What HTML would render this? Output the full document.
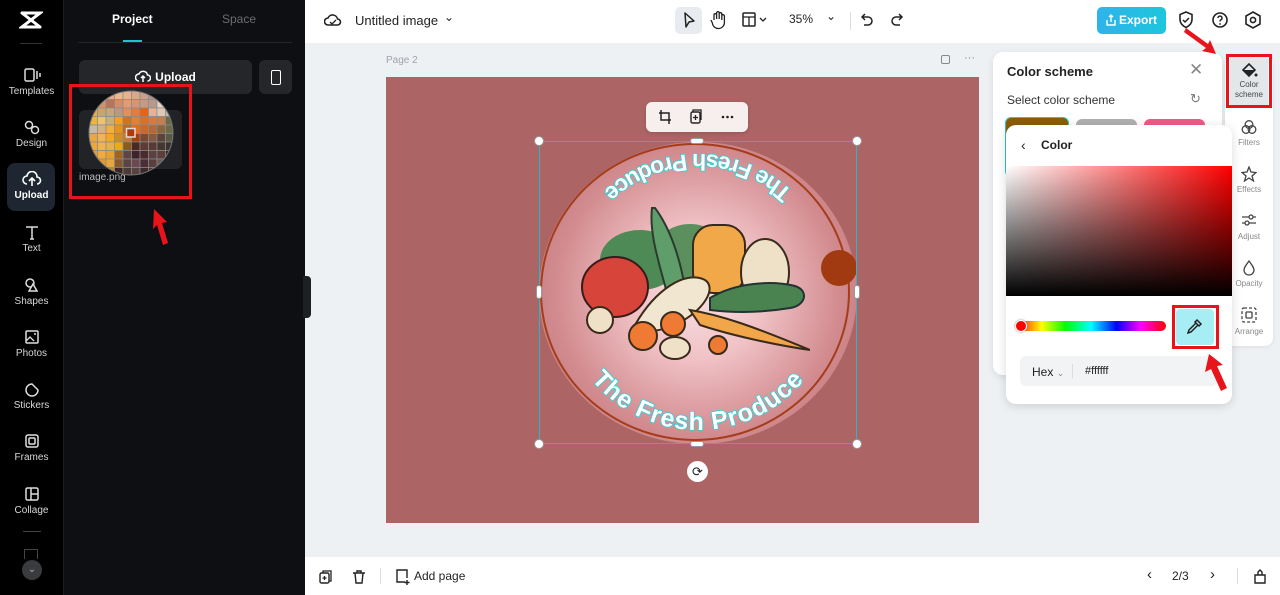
<!DOCTYPE html>
<html><head><meta charset="utf-8">
<style>
*{box-sizing:border-box;margin:0;padding:0}
body{width:1280px;height:595px;overflow:hidden;position:relative;font-family:"Liberation Sans",sans-serif;background:#eef1f4}
.abs{position:absolute}
.nav{left:0;top:0;width:63px;height:595px;background:#000}
.navi{position:absolute;left:0;width:63px;text-align:center;color:#d8d8d8;font-size:10px}
.navi svg{display:block;margin:0 auto 3px}
.panel{left:63px;top:0;width:242px;height:595px;background:#0e0f12;border-left:1px solid #1c1d20}
.top{left:305px;top:0;width:975px;height:43px;background:#fff}
.bot{left:305px;top:557px;width:975px;height:38px;background:#fff}
.red{border:3px solid #e8141c}
</style></head><body>

<div class="abs nav">
  <svg class="abs" style="left:19px;top:10px" width="24" height="20" viewBox="0 0 24 20"><path d="M3 3h18L3 17h18M3 3l18 14" stroke="#fff" stroke-width="3" fill="none" stroke-linecap="round"/></svg>
  <div class="abs" style="left:20px;top:43px;width:22px;height:1px;background:#333"></div>
  <div class="navi" style="top:67px"><svg width="18" height="16"><rect x="2" y="2" width="9" height="12" rx="1.5" stroke="#ddd" stroke-width="1.5" fill="none"/><path d="M14 4v8M17 6v4" stroke="#ddd" stroke-width="1.5"/></svg>Templates</div>
  <div class="navi" style="top:119px"><svg width="18" height="16"><circle cx="6" cy="6" r="3.5" stroke="#ddd" stroke-width="1.5" fill="none"/><circle cx="12" cy="11" r="3.5" stroke="#ddd" stroke-width="1.5" fill="none"/></svg>Design</div>
  <div class="abs" style="left:7px;top:163px;width:48px;height:48px;border-radius:8px;background:#1d2631"></div>
  <div class="navi" style="top:171px;color:#fff;font-weight:bold"><svg width="20" height="16"><path d="M5 13a4 4 0 0 1 0-8 5 5 0 0 1 10 1 3.5 3.5 0 0 1 0 7M10 8v7M7 10l3-3 3 3" stroke="#fff" stroke-width="1.6" fill="none"/></svg>Upload</div>
  <div class="navi" style="top:224px"><svg width="18" height="16"><path d="M3 3h12M9 3v12M7 15h4" stroke="#ddd" stroke-width="1.5" fill="none"/></svg>Text</div>
  <div class="navi" style="top:277px"><svg width="18" height="16"><circle cx="7" cy="6" r="4" stroke="#ddd" stroke-width="1.5" fill="none"/><path d="M10 7l4 7H6z" stroke="#ddd" stroke-width="1.5" fill="#000"/></svg>Shapes</div>
  <div class="navi" style="top:329px"><svg width="18" height="16"><rect x="3" y="2" width="12" height="12" rx="1" stroke="#ddd" stroke-width="1.5" fill="none"/><path d="M3 12l4-4 4 4" stroke="#ddd" stroke-width="1.3" fill="none"/><circle cx="12" cy="5" r="1" fill="#ddd"/></svg>Photos</div>
  <div class="navi" style="top:381px"><svg width="18" height="16"><path d="M15 9a6 6 0 1 1-6-6l6 6z" stroke="#ddd" stroke-width="1.5" fill="none"/></svg>Stickers</div>
  <div class="navi" style="top:433px"><svg width="18" height="16"><rect x="3" y="2" width="12" height="12" rx="2" stroke="#ddd" stroke-width="1.5" fill="none"/><rect x="6" y="5" width="6" height="6" rx="1" stroke="#ddd" stroke-width="1.5" fill="none"/></svg>Frames</div>
  <div class="navi" style="top:486px"><svg width="18" height="16"><rect x="3" y="2" width="12" height="12" rx="1.5" stroke="#ddd" stroke-width="1.5" fill="none"/><path d="M8 2v12M8 8h7" stroke="#ddd" stroke-width="1.5"/></svg>Collage</div>
  <div class="abs" style="left:23px;top:531px;width:18px;height:1px;background:#444"></div>
  <div class="abs" style="left:24px;top:549px;width:14px;height:10px;border:1px solid #444;border-bottom:none"></div>
  <div class="abs" style="left:22px;top:560px;width:20px;height:20px;border-radius:50%;background:#3a3b3f;color:#aaa;font-size:10px;text-align:center;line-height:20px">⌄</div>
</div>

<div class="abs panel">
  <div class="abs" style="left:48px;top:12px;color:#fff;font-weight:bold;font-size:12px">Project</div>
  <div class="abs" style="left:158px;top:12px;color:#6c6d70;font-size:12px">Space</div>
  <div class="abs" style="left:14px;top:42px;width:214px;height:1px;background:#25262a"></div>
  <div class="abs" style="left:59px;top:40px;width:19px;height:2px;background:#1fc1d3"></div>
  <div class="abs" style="left:15px;top:60px;width:173px;height:34px;border-radius:6px;background:#25262a;color:#fff;font-weight:bold;font-size:12px;line-height:34px;text-align:center">
    <svg width="16" height="14" style="vertical-align:-2px;margin-right:4px"><path d="M4 12a3.5 3.5 0 0 1 0-7 4.5 4.5 0 0 1 8.5 1 3 3 0 0 1 0 6M8 7v6M6 9l2-2 2 2" stroke="#fff" stroke-width="1.5" fill="none"/></svg>Upload</div>
  <div class="abs" style="left:195px;top:60px;width:33px;height:34px;border-radius:6px;background:#25262a"><div style="margin:10px auto;width:10px;height:15px;border:1.5px solid #fff;border-radius:2px"></div></div>
  <div class="abs" style="left:15px;top:110px;width:103px;height:59px;border-radius:6px;background:#222327"></div>
  <div class="abs" style="left:15px;top:172px;color:#bbb;font-size:10px">image.png</div>
</div>
<svg class="abs" style="left:86px;top:88px" width="90" height="90" viewBox="0 0 90 90">
  <defs><clipPath id="c"><circle cx="45" cy="45" r="42"/></clipPath></defs>
  <g clip-path="url(#c)" stroke="#8a8a8a" stroke-width="0.7">
    <g id="grid"></g>
  </g>
  <circle cx="45" cy="45" r="42" fill="none" stroke="#777" stroke-width="1"/>
</svg>
<div class="abs red" style="left:69px;top:84px;width:123px;height:115px"></div>
<svg class="abs" style="left:148px;top:205px" width="30" height="44"><path d="M6 4l13 13-5 1 6 20-5 2-6-20-4 4z" fill="#e8141c"/></svg>
<div class="abs" style="left:303px;top:276px;width:8px;height:42px;background:#1e1f22;border-radius:0 4px 4px 0"></div>

<div class="abs top">
  <svg class="abs" style="left:19px;top:12px" width="18" height="16"><path d="M4 13a3.5 3.5 0 0 1 0-7 5 5 0 0 1 9.5 1 3 3 0 0 1 0 6z" stroke="#222" stroke-width="1.6" fill="none"/><path d="M6 10l2 2 4-4" stroke="#222" stroke-width="1.3" fill="none"/></svg>
  <div class="abs" style="left:50px;top:13px;font-size:13px;color:#222">Untitled image</div>
  <div class="abs" style="left:139px;top:10px;font-size:12px;color:#222">⌄</div>
  <div class="abs" style="left:370px;top:7px;width:27px;height:27px;border-radius:5px;background:#e8ecf0"></div>
  <svg class="abs" style="left:376px;top:11px" width="16" height="18"><path d="M4 2l9 8-5 1-3 5z" stroke="#222" stroke-width="1.5" fill="none" stroke-linejoin="round"/></svg>
  <svg class="abs" style="left:404px;top:10px" width="18" height="20"><path d="M5 10V5a1.3 1.3 0 0 1 2.6 0v4V3a1.3 1.3 0 0 1 2.6 0v6V4a1.3 1.3 0 0 1 2.6 0v6V6a1.3 1.3 0 0 1 2.6 0v6a6 6 0 0 1-12 1l-1.5-3" stroke="#222" stroke-width="1.3" fill="none"/></svg>
  <svg class="abs" style="left:437px;top:12px" width="28" height="16"><rect x="1" y="1" width="12" height="13" rx="1" stroke="#222" stroke-width="1.5" fill="none"/><path d="M1 5h12M7 5v9M18 6l3 3 3-3" stroke="#222" stroke-width="1.3" fill="none"/></svg>
  <div class="abs" style="left:484px;top:12px;font-size:12px;color:#222">35%</div>
  <div class="abs" style="left:521px;top:9px;font-size:12px;color:#222">⌄</div>
  <div class="abs" style="left:545px;top:12px;width:1px;height:18px;background:#ddd"></div>
  <svg class="abs" style="left:554px;top:11px" width="16" height="18"><path d="M6 3L3 6l3 3M3 6h6a4 4 0 0 1 0 8H5" stroke="#222" stroke-width="1.5" fill="none"/></svg>
  <svg class="abs" style="left:584px;top:11px" width="16" height="18"><path d="M10 3l3 3-3 3M13 6H7a4 4 0 0 0 0 8h4" stroke="#222" stroke-width="1.5" fill="none"/></svg>
  <div class="abs" style="left:792px;top:7px;width:69px;height:27px;border-radius:5px;background:linear-gradient(90deg,#2fb3ea,#1dc6dc);color:#fff;font-weight:bold;font-size:12px;line-height:27px;padding-left:22px">Export</div>
  <svg class="abs" style="left:800px;top:13px" width="12" height="14"><path d="M2 7v5h8V7M6 9V2M4 4l2-2 2 2" stroke="#fff" stroke-width="1.4" fill="none"/></svg>
  <svg class="abs" style="left:872px;top:10px" width="18" height="20"><path d="M9 2l6 2.5v5c0 4-3 6.5-6 8-3-1.5-6-4-6-8v-5z" stroke="#222" stroke-width="1.6" fill="none"/><path d="M6 10l2 2 4-4" stroke="#222" stroke-width="1.5" fill="none"/></svg>
  <svg class="abs" style="left:905px;top:10px" width="20" height="20"><circle cx="10" cy="10" r="7" stroke="#222" stroke-width="1.6" fill="none"/><path d="M8 8a2 2 0 1 1 2.5 2c-.5.3-.5.8-.5 1.5" stroke="#222" stroke-width="1.4" fill="none"/><circle cx="10" cy="14" r=".9" fill="#222"/></svg>
  <svg class="abs" style="left:938px;top:10px" width="20" height="20"><path d="M10 2l7 4v8l-7 4-7-4V6z" stroke="#222" stroke-width="1.6" fill="none"/><circle cx="10" cy="10" r="2.6" stroke="#222" stroke-width="1.6" fill="none"/></svg>
</div>

<div class="abs" style="left:386px;top:55px;font-size:10px;color:#a0a4a8">Page 2</div>
<div class="abs" style="left:941px;top:55px;width:9px;height:9px;border:1.3px solid #888;border-radius:2px"></div>
<div class="abs" style="left:964px;top:52px;font-size:11px;color:#888">···</div>

<div class="abs" style="left:386px;top:77px;width:593px;height:446px;background:#ad6464"></div>
<div class="abs" style="left:539px;top:142px;width:318px;height:302px;border-radius:50%;background:radial-gradient(circle at 50% 50%,#f7e0e2 0%,#f0c2c6 30%,#d28b8f 65%,#b36a6c 100%)"></div>
<div class="abs" style="left:540px;top:143px;width:310px;height:298px;border-radius:50%;border:2px solid #a53c1a"></div>
<svg class="abs" style="left:560px;top:190px" width="250" height="170" viewBox="0 0 250 170">
  <ellipse cx="80" cy="70" rx="40" ry="30" fill="#4d8a56"/>
  <ellipse cx="130" cy="62" rx="35" ry="28" fill="#5b8f5e"/>
  <path d="M95 18c15 20 25 50 30 80l-18 5c-8-30-18-60-15-85z" fill="#5f9e6b" stroke="#2b3b2c" stroke-width="2"/>
  <rect x="133" y="35" width="52" height="68" rx="20" fill="#f0a848" stroke="#3a2a1a" stroke-width="2"/>
  <ellipse cx="205" cy="82" rx="24" ry="33" fill="#efe1c8" stroke="#3a2a1a" stroke-width="2"/>
  <ellipse cx="55" cy="97" rx="33" ry="30" fill="#d6443a" stroke="#3a1a1a" stroke-width="2"/>
  <path d="M150 108c25-15 60-18 85-12 15 5 10 20-5 22-30 5-55 5-80 2z" fill="#4b8350" stroke="#233" stroke-width="2"/>
  <path d="M75 135c20-35 50-55 70-45 12 8 0 30-30 45-20 8-35 8-40 0z" fill="#f1e6cf" stroke="#3a2a1a" stroke-width="2"/>
  <path d="M130 120c30 5 60 15 120 40-35-5-80-15-110-25z" fill="#f1a64a" stroke="#3a2a1a" stroke-width="2"/>
  <circle cx="40" cy="130" r="13" fill="#efe1c8" stroke="#3a2a1a" stroke-width="2"/>
  <circle cx="83" cy="146" r="14" fill="#ee7a33" stroke="#3a2a1a" stroke-width="2"/>
  <circle cx="113" cy="134" r="12" fill="#ee7a33" stroke="#3a2a1a" stroke-width="2"/>
  <ellipse cx="115" cy="158" rx="15" ry="11" fill="#efe1c8" stroke="#3a2a1a" stroke-width="2"/>
  <circle cx="158" cy="155" r="9" fill="#ee7a33" stroke="#3a2a1a" stroke-width="2"/>
</svg>
<svg class="abs" style="left:539px;top:141px" width="318" height="303" viewBox="0 0 318 303">
  <defs>
    <path id="tp" d="M39.5 220 A 138 138 0 0 0 278.5 220"/>
  </defs>
  <text font-family="Liberation Sans,sans-serif" font-weight="bold" font-size="25" fill="#fff" stroke="#2ad0d8" stroke-width="1.6" paint-order="stroke" letter-spacing="1"><textPath href="#tp" startOffset="50%" text-anchor="middle">The Fresh Produce</textPath></text>
  <g transform="rotate(180 159 151)">
  <text font-family="Liberation Sans,sans-serif" font-weight="bold" font-size="23" fill="#fff" stroke="#2ad0d8" stroke-width="1.6" paint-order="stroke"><textPath href="#tp" startOffset="50%" text-anchor="middle">The Fresh Produce</textPath></text>
  </g>
</svg>
<div class="abs" style="left:821px;top:250px;width:36px;height:36px;border-radius:50%;background:#a13a10"></div>
<div class="abs" style="left:539px;top:141px;width:318px;height:303px;border:1.5px solid #27b7c6"></div>
<div class="abs" style="left:534px;top:136px;width:10px;height:10px;border-radius:50%;background:#fff;border:1px solid #999"></div>
<div class="abs" style="left:852px;top:136px;width:10px;height:10px;border-radius:50%;background:#fff;border:1px solid #999"></div>
<div class="abs" style="left:534px;top:439px;width:10px;height:10px;border-radius:50%;background:#fff;border:1px solid #999"></div>
<div class="abs" style="left:852px;top:439px;width:10px;height:10px;border-radius:50%;background:#fff;border:1px solid #999"></div>
<div class="abs" style="left:690px;top:138px;width:14px;height:6px;border-radius:3px;background:#fff;border:1px solid #999"></div>
<div class="abs" style="left:690px;top:441px;width:14px;height:6px;border-radius:3px;background:#fff;border:1px solid #999"></div>
<div class="abs" style="left:536px;top:285px;width:6px;height:14px;border-radius:3px;background:#fff;border:1px solid #999"></div>
<div class="abs" style="left:854px;top:285px;width:6px;height:14px;border-radius:3px;background:#fff;border:1px solid #999"></div>
<div class="abs" style="left:687px;top:461px;width:21px;height:21px;border-radius:50%;background:#fff;text-align:center;font-size:13px;line-height:21px;color:#222">⟳</div>
<div class="abs" style="left:646px;top:102px;width:102px;height:30px;border-radius:6px;background:#f7eeee;box-shadow:0 1px 4px rgba(0,0,0,.15)"></div>
<svg class="abs" style="left:658px;top:109px" width="80" height="16"><path d="M3 1v10h10M1 4h10v11" stroke="#222" stroke-width="1.5" fill="none"/><rect x="33" y="3" width="9" height="11" rx="1.5" stroke="#222" stroke-width="1.4" fill="none"/><path d="M35 3V1h8v10M37.5 6v5M35 8.5h5" stroke="#222" stroke-width="1.3" fill="none"/><circle cx="65" cy="8" r="1.3" fill="#222"/><circle cx="69.5" cy="8" r="1.3" fill="#222"/><circle cx="74" cy="8" r="1.3" fill="#222"/></svg>

<div class="abs" style="left:993px;top:52px;width:229px;height:323px;border-radius:10px;background:#fff;box-shadow:0 2px 8px rgba(0,0,0,.1)"></div>
<div class="abs" style="left:1007px;top:64px;font-size:13px;font-weight:bold;color:#222">Color scheme</div>
<div class="abs" style="left:1189px;top:60px;font-size:17px;color:#888">✕</div>
<div class="abs" style="left:1007px;top:93px;font-size:12px;color:#333">Select color scheme</div>
<div class="abs" style="left:1190px;top:91px;font-size:13px;color:#777">↻</div>
<div class="abs" style="left:1005px;top:117px;width:64px;height:60px;border-radius:6px;border:1.5px solid #2bc4d6;background:#8e5c07"></div>
<div class="abs" style="left:1076px;top:119px;width:61px;height:20px;border-radius:6px;background:#b0b0b0"></div>
<div class="abs" style="left:1144px;top:119px;width:61px;height:20px;border-radius:6px;background:#ef5a86"></div>
<div class="abs" style="left:1225px;top:55px;width:48px;height:291px;border-radius:8px;background:#fff;box-shadow:0 1px 4px rgba(0,0,0,.08)"></div>
<div class="abs" style="left:1230px;top:57px;width:38px;height:48px;background:#e4e7ea"></div>
<div class="abs red" style="left:1226px;top:54px;width:46px;height:54px"></div>
<svg class="abs" style="left:1240px;top:61px" width="18" height="18"><path d="M3 9l6-6 6 6-6 6z" stroke="#222" stroke-width="1.6" fill="none"/><path d="M3 9h12l-6 6z" fill="#222"/><circle cx="16" cy="14" r="1.5" fill="#222"/></svg>
<div class="abs" style="left:1227px;top:80px;width:44px;text-align:center;font-size:8px;color:#444;line-height:10px">Color<br>scheme</div>
<svg class="abs" style="left:1241px;top:119px" width="16" height="16"><circle cx="8" cy="5.5" r="3.8" stroke="#444" stroke-width="1.3" fill="none"/><circle cx="5" cy="10.5" r="3.8" stroke="#444" stroke-width="1.3" fill="none"/><circle cx="11" cy="10.5" r="3.8" stroke="#444" stroke-width="1.3" fill="none"/></svg>
<div class="abs" style="left:1225px;top:138px;width:48px;text-align:center;font-size:8px;color:#888">Filters</div>
<svg class="abs" style="left:1241px;top:166px" width="16" height="16"><path d="M8 1l2 5 5 .5-4 3.5 1.5 5L8 12l-4.5 3L5 10 1 6.5 6 6z" stroke="#444" stroke-width="1.3" fill="none"/></svg>
<div class="abs" style="left:1225px;top:185px;width:48px;text-align:center;font-size:8px;color:#888">Effects</div>
<svg class="abs" style="left:1241px;top:212px" width="16" height="16"><path d="M1 5h14M1 11h14" stroke="#444" stroke-width="1.3"/><circle cx="10" cy="5" r="2" fill="#fff" stroke="#444" stroke-width="1.3"/><circle cx="6" cy="11" r="2" fill="#fff" stroke="#444" stroke-width="1.3"/></svg>
<div class="abs" style="left:1225px;top:232px;width:48px;text-align:center;font-size:8px;color:#888">Adjust</div>
<svg class="abs" style="left:1241px;top:260px" width="16" height="16"><path d="M8 1c3 4 5 6.5 5 9a5 5 0 0 1-10 0c0-2.5 2-5 5-9z" stroke="#444" stroke-width="1.3" fill="none"/></svg>
<div class="abs" style="left:1225px;top:279px;width:48px;text-align:center;font-size:8px;color:#888">Opacity</div>
<svg class="abs" style="left:1241px;top:307px" width="16" height="16"><rect x="1" y="1" width="14" height="14" rx="2" stroke="#444" stroke-width="1.3" fill="none" stroke-dasharray="3 2"/><rect x="5" y="5" width="6" height="6" rx="1" stroke="#444" stroke-width="1.3" fill="none"/></svg>
<div class="abs" style="left:1225px;top:327px;width:48px;text-align:center;font-size:8px;color:#888">Arrange</div>
<svg class="abs" style="left:1182px;top:24px" width="40" height="32"><path d="M4 4l22 16 2-4 6 14-14-3 4-3L2 8z" fill="#e8141c"/></svg>

<div class="abs" style="left:1006px;top:125px;width:226px;height:279px;border-radius:10px;background:#fff;box-shadow:0 2px 10px rgba(0,0,0,.15)"></div>
<div class="abs" style="left:1021px;top:137px;font-size:14px;color:#222">‹</div>
<div class="abs" style="left:1041px;top:138px;font-size:12px;font-weight:bold;color:#222">Color</div>
<div class="abs" style="left:1006px;top:166px;width:226px;height:130px;background:linear-gradient(to bottom,rgba(0,0,0,0),#000),linear-gradient(to right,#fff,#f00)"></div>
<div class="abs" style="left:1016px;top:321px;width:150px;height:10px;border-radius:5px;background:linear-gradient(90deg,#f00,#ff0 17%,#0f0 33%,#0ff 50%,#00f 67%,#f0f 83%,#f00)"></div>
<div class="abs" style="left:1015px;top:320px;width:12px;height:12px;border-radius:50%;background:#f00;border:1.5px solid #fff;box-shadow:0 0 2px #888"></div>
<div class="abs" style="left:1176px;top:309px;width:38px;height:36px;border-radius:4px;background:#a6eef4"></div>
<div class="abs red" style="left:1172px;top:305px;width:47px;height:44px"></div>
<svg class="abs" style="left:1186px;top:317px" width="18" height="18"><path d="M11 3l4 4-2 2-4-4zM10 6l-7 7-1 3 3-1 7-7" stroke="#222" stroke-width="1.5" fill="none"/></svg>
<div class="abs" style="left:1020px;top:356px;width:198px;height:30px;border-radius:6px;background:#f1f3f5"></div>
<div class="abs" style="left:1032px;top:365px;font-size:12px;color:#222">Hex <span style="font-size:9px;color:#888">⌄</span></div>
<div class="abs" style="left:1072px;top:364px;width:1px;height:14px;background:#ddd"></div>
<div class="abs" style="left:1085px;top:365px;font-size:11px;color:#222">#ffffff</div>
<svg class="abs" style="left:1203px;top:350px" width="30" height="46"><path d="M6 4l-4 18 6-3 10 22 6-3-10-22 6-1z" fill="#e8141c"/></svg>

<div class="abs bot">
  <svg class="abs" style="left:13px;top:12px" width="16" height="16"><rect x="2" y="4" width="9" height="10" rx="1.5" stroke="#222" stroke-width="1.4" fill="none"/><path d="M5 4V2h8v10h-2M6.5 7v4M4.5 9h4" stroke="#222" stroke-width="1.3" fill="none"/></svg>
  <svg class="abs" style="left:46px;top:12px" width="16" height="16"><path d="M2 4h12M6 4V2h4v2M4 4l1 10h6l1-10" stroke="#222" stroke-width="1.4" fill="none"/></svg>
  <div class="abs" style="left:75px;top:11px;width:1px;height:16px;background:#ddd"></div>
  <svg class="abs" style="left:89px;top:11px" width="18" height="18"><path d="M11 14H3V2h10v8M13 12v5M10.5 14.5h5" stroke="#222" stroke-width="1.4" fill="none"/></svg>
  <div class="abs" style="left:109px;top:12px;font-size:12px;color:#222">Add page</div>
  <div class="abs" style="left:842px;top:9px;font-size:15px;color:#222">‹</div>
  <div class="abs" style="left:867px;top:12px;font-size:12px;color:#222">2/3</div>
  <div class="abs" style="left:905px;top:9px;font-size:15px;color:#222">›</div>
  <div class="abs" style="left:932px;top:11px;width:1px;height:16px;background:#ddd"></div>
  <svg class="abs" style="left:947px;top:10px" width="16" height="18"><path d="M3 8h10v8H3zM6 8V5l2-2 2 2v3" stroke="#222" stroke-width="1.4" fill="none"/></svg>
</div>

<script>
var cols=[
"#d7a58a,#e3a585,#e9a985,#f0b68e,#e8b291,#d9a98c,#c9a08b,#b79486,#a58a84,#998482",
"#c89d7d,#d89164,#b87358,#d48c69,#e19c75,#d59576,#c59b86,#b79a8c,#e3d4c7,#ccc",
"#f2a646,#cba46c,#c7a77a,#b99883,#e38e5c,#e17c43,#e8620f,#e7b298,#e0c8b4,#bbb",
"#f0b43c,#eec276,#c8ad7d,#f0a21e,#d2741d,#e08133,#d8712a,#d47a42,#c47e4e,#6b6a48",
"#c8b8a6,#d7b089,#f0b040,#e2941c,#c0641e,#e86e0c,#c86a2c,#b06a3c,#8a6640,#6e6a48",
"#e8a840,#f2b35a,#f2aa1c,#cc8d24,#c57a34,#a5400c,#7a4a34,#855a40,#5c4438,#5a5a42",
"#eea838,#f3b24a,#eab048,#f0aa10,#8e5a18,#4a2826,#5c3a36,#5a3a34,#463632,#3a3230",
"#e8a030,#f2aa3c,#e8a030,#a0641c,#5e4444,#3e2428,#4a2a2c,#5a4040,#5c3e3a,#2e2624",
"#d89030,#e49a30,#e6a83c,#8a5a2a,#5a4444,#6a4a4e,#4a3036,#5a3e40,#6a5a56,#3e3432",
"#c88a34,#d08a28,#c0822c,#3a2624,#4e3a36,#5a4240,#3e2a2c,#4a3636,#5a4a48,#2a2422"];
var g=document.getElementById('grid'),s='';
for(var r=0;r<10;r++){var c=cols[r].split(',');for(var k=0;k<10;k++){s+='<rect x="'+(3+k*8.5)+'" y="'+(3+r*8.5)+'" width="8.5" height="8.5" fill="'+c[k]+'"/>';}}
s+='<rect x="40.5" y="40.5" width="8.5" height="8.5" fill="#a5400c" stroke="#ddd" stroke-width="1.5"/>';
g.innerHTML=s;
</script>
</body></html>
